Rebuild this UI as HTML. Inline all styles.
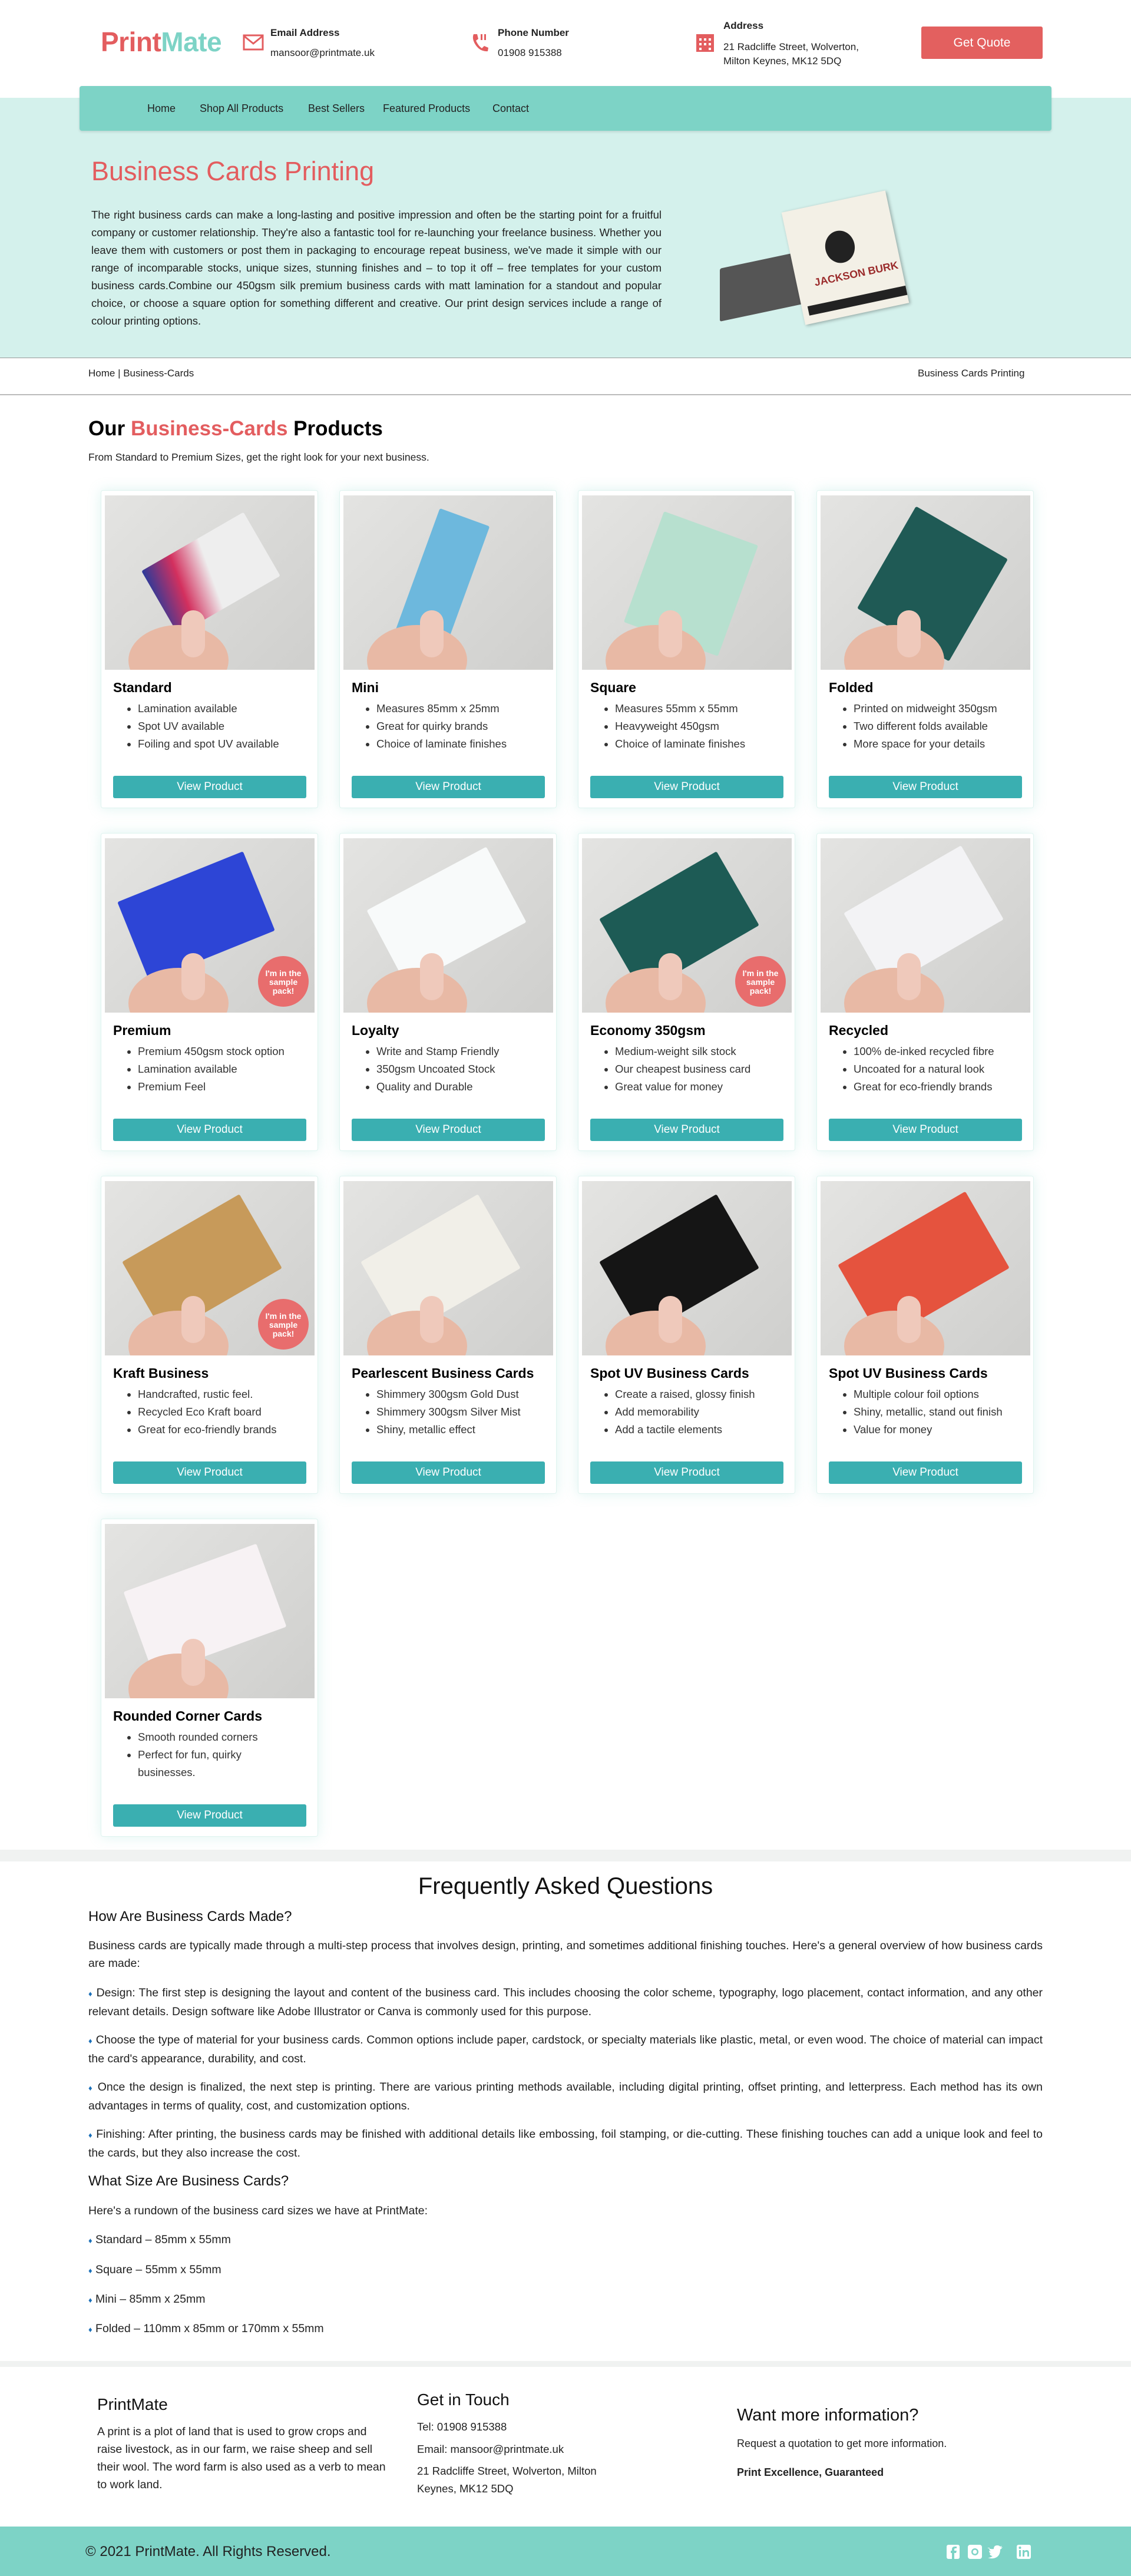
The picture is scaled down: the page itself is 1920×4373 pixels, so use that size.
<!DOCTYPE html>
<html><head><meta charset="utf-8"><style>
*{box-sizing:border-box;margin:0;padding:0}
body{width:1920px;height:4373px;position:relative;background:#fff;font-family:"Liberation Sans",sans-serif;color:#222;overflow:hidden}
.a{position:absolute}
.red{color:#e35d5f}
.hero{left:0;top:166px;width:1920px;height:442px;background:#d4f1ec}
.nav{left:135px;top:146px;width:1650px;height:76px;background:#7dd3c6;border-radius:4px;box-shadow:0 2px 4px rgba(0,0,0,.12)}
.nav span{position:absolute;top:28px;font-size:18px;color:#222}
.card{position:absolute;width:369px;height:540px;background:#fff;border:1px solid #dff3ef;border-radius:4px;box-shadow:0 0 22px rgba(125,211,198,.25)}
.img{position:absolute;left:6px;top:8px;width:356px;height:296px;background:linear-gradient(135deg,#e4e4e2,#cfcfcd);overflow:hidden}
.bc{position:absolute;width:200px;height:125px;left:80px;top:70px;transform:rotate(-30deg);border-radius:3px}
.hand{position:absolute;left:40px;top:220px;width:170px;height:120px;border-radius:50%;background:#e8b9a5}
.thumb{position:absolute;left:130px;top:195px;width:40px;height:80px;border-radius:20px;background:#efc9bb}
.badge{position:absolute;right:10px;top:200px;width:86px;height:86px;border-radius:50%;background:#e86d6d;color:#fff;font-weight:bold;font-size:14px;text-align:center;padding-top:22px;line-height:15px}
.card h3{position:absolute;left:20px;top:321px;font-size:23px;color:#000}
.card ul{position:absolute;left:44px;top:355px;width:310px;font-size:18.5px;line-height:30px;color:#333;list-style:disc;padding-left:18px}
.btn{position:absolute;left:20px;top:484px;width:328px;height:38px;background:#3aafb1;color:#fff;text-align:center;font-size:19px;line-height:38px;border-radius:3px}
.faq p{position:absolute;left:150px;width:1620px;font-size:19.5px;line-height:30px;color:#222;text-align:justify}
.dot{color:#1a6fb8;font-size:13px}
</style></head><body>
<div class="a" style="left:171px;top:44px;font-size:46px;font-weight:bold;letter-spacing:-0.5px"><span class="red">Print</span><span style="color:#7dd3c6">Mate</span></div>
<svg class="a" style="left:412px;top:58px" width="36" height="28" viewBox="0 0 36 28"><rect x="2" y="2" width="32" height="24" fill="none" stroke="#e35d5f" stroke-width="3"/><path d="M2 3 L18 16 L34 3" fill="none" stroke="#e35d5f" stroke-width="3"/></svg>
<div class="a" style="left:459px;top:46px;font-size:17px;font-weight:bold">Email Address</div>
<div class="a" style="left:459px;top:80px;font-size:17px">mansoor@printmate.uk</div>
<svg class="a" style="left:798px;top:54px" width="34" height="36" viewBox="0 0 34 36"><path d="M6 4 L12 4 L14 12 L10 15 Q14 24 20 28 L24 24 L31 27 L30 33 Q16 34 8 20 Q3 11 6 4Z" fill="#e35d5f"/><rect x="18" y="4" width="3" height="10" fill="#e35d5f"/><rect x="24" y="4" width="3" height="10" fill="#e35d5f"/></svg>
<div class="a" style="left:845px;top:46px;font-size:17px;font-weight:bold">Phone Number</div>
<div class="a" style="left:845px;top:80px;font-size:17px">01908 915388</div>
<svg class="a" style="left:1180px;top:56px" width="34" height="34" viewBox="0 0 34 34"><rect x="2" y="2" width="30" height="30" fill="#e35d5f"/><g fill="#fff"><rect x="7" y="9" width="4" height="4"/><rect x="15" y="9" width="4" height="4"/><rect x="23" y="9" width="4" height="4"/><rect x="7" y="17" width="4" height="4"/><rect x="15" y="17" width="4" height="4"/><rect x="23" y="17" width="4" height="4"/><rect x="7" y="25" width="4" height="4"/><rect x="23" y="25" width="4" height="4"/></g></svg>
<div class="a" style="left:1228px;top:34px;font-size:17px;font-weight:bold">Address</div>
<div class="a" style="left:1228px;top:68px;font-size:17px;line-height:24px">21 Radcliffe Street, Wolverton,<br>Milton Keynes, MK12 5DQ</div>
<div class="a" style="left:1564px;top:45px;width:206px;height:55px;background:#e3605f;color:#fff;border-radius:3px;font-size:21px;text-align:center;line-height:55px">Get Quote</div>
<div class="a hero"></div>
<div class="a nav"><span style="left:115px">Home</span><span style="left:204px">Shop All Products</span><span style="left:388px">Best Sellers</span><span style="left:515px">Featured Products</span><span style="left:701px">Contact</span></div>
<div class="a red" style="left:155px;top:265px;font-size:45px">Business Cards Printing</div>
<div class="a" style="left:155px;top:350px;width:968px;font-size:18.5px;line-height:30px;text-align:justify;color:#222">The right business cards can make a long-lasting and positive impression and often be the starting point for a fruitful company or customer relationship. They're also a fantastic tool for re-launching your freelance business. Whether you leave them with customers or post them in packaging to encourage repeat business, we've made it simple with our range of incomparable stocks, unique sizes, stunning finishes and – to top it off – free templates for your custom business cards.Combine our 450gsm silk premium business cards with matt lamination for a standout and popular choice, or choose a square option for something different and creative. Our print design services include a range of colour printing options.</div>
<div class="a" style="left:1222px;top:440px;width:150px;height:90px;background:#555;transform:skewY(-12deg);border-radius:3px"></div>
<div class="a" style="left:1345px;top:340px;width:180px;height:195px;background:#f3f0e6;transform:rotate(-12deg);box-shadow:2px 2px 6px rgba(0,0,0,.3)"><div style="position:absolute;left:60px;top:50px;width:50px;height:55px;border-radius:50%;background:#222"></div><div style="position:absolute;left:30px;top:118px;font-size:18px;font-weight:bold;color:#9b2c2c">JACKSON BURK</div><div style="position:absolute;left:10px;top:165px;width:170px;height:16px;background:#222"></div></div>
<div class="a" style="left:0;top:607px;width:1920px;height:1px;background:#999"></div>
<div class="a" style="left:150px;top:624px;font-size:17px">Home | Business-Cards</div>
<div class="a" style="left:1558px;top:624px;font-size:17px">Business Cards Printing</div>
<div class="a" style="left:0;top:669px;width:1920px;height:2px;background:#bbb"></div>
<div class="a" style="left:150px;top:708px;font-size:35px;font-weight:bold;color:#000">Our <span class="red">Business-Cards</span> Products</div>
<div class="a" style="left:150px;top:766px;font-size:17.5px">From Standard to Premium Sizes, get the right look for your next business.</div>

<div class="card" style="left:171px;top:832px"><div class="img"><div class="bc" style="background:linear-gradient(100deg,#2a3a9a,#d3305e 25%,#eee 50%)"></div><div class="hand"></div><div class="thumb"></div></div><h3>Standard</h3><ul><li>Lamination available</li><li>Spot UV available</li><li>Foiling and spot UV available</li></ul><div class="btn">View Product</div></div>
<div class="card" style="left:576px;top:832px"><div class="img"><div class="bc" style="background:#6db8dd;width:90px;height:240px;left:120px;top:30px;transform:rotate(20deg)"></div><div class="hand"></div><div class="thumb"></div></div><h3>Mini</h3><ul><li>Measures 85mm x 25mm</li><li>Great for quirky brands</li><li>Choice of laminate finishes</li></ul><div class="btn">View Product</div></div>
<div class="card" style="left:981px;top:832px"><div class="img"><div class="bc" style="background:#b7e0cf;width:170px;height:200px;left:100px;top:50px;transform:rotate(20deg)"></div><div class="hand"></div><div class="thumb"></div></div><h3>Square</h3><ul><li>Measures 55mm x 55mm</li><li>Heavyweight 450gsm</li><li>Choice of laminate finishes</li></ul><div class="btn">View Product</div></div>
<div class="card" style="left:1386px;top:832px"><div class="img"><div class="bc" style="background:#1f5a55;width:180px;height:200px;left:100px;top:50px;transform:rotate(30deg)"></div><div class="hand"></div><div class="thumb"></div></div><h3>Folded</h3><ul><li>Printed on midweight 350gsm</li><li>Two different folds available</li><li>More space for your details</li></ul><div class="btn">View Product</div></div>

<div class="card" style="left:171px;top:1414px"><div class="img"><div class="bc" style="background:#2d45d6;width:230px;height:145px;left:40px;top:60px;transform:rotate(-22deg)"></div><div class="hand"></div><div class="thumb"></div><div class="badge">I'm in the sample pack!</div></div><h3>Premium</h3><ul><li>Premium 450gsm stock option</li><li>Lamination available</li><li>Premium Feel</li></ul><div class="btn">View Product</div></div>
<div class="card" style="left:576px;top:1414px"><div class="img"><div class="bc" style="background:#f8fafa;width:230px;height:145px;left:60px;top:60px;transform:rotate(-28deg)"></div><div class="hand"></div><div class="thumb"></div></div><h3>Loyalty</h3><ul><li>Write and Stamp Friendly</li><li>350gsm Uncoated Stock</li><li>Quality and Durable</li></ul><div class="btn">View Product</div></div>
<div class="card" style="left:981px;top:1414px"><div class="img"><div class="bc" style="background:#1d5b55;width:230px;height:145px;left:50px;top:70px;transform:rotate(-30deg)"></div><div class="hand"></div><div class="thumb"></div><div class="badge">I'm in the sample pack!</div></div><h3>Economy 350gsm</h3><ul><li>Medium-weight silk stock</li><li>Our cheapest business card</li><li>Great value for money</li></ul><div class="btn">View Product</div></div>
<div class="card" style="left:1386px;top:1414px"><div class="img"><div class="bc" style="background:#f3f3f5;width:230px;height:145px;left:60px;top:60px;transform:rotate(-30deg)"></div><div class="hand"></div><div class="thumb"></div></div><h3>Recycled</h3><ul><li>100% de-inked recycled fibre</li><li>Uncoated for a natural look</li><li>Great for eco-friendly brands</li></ul><div class="btn">View Product</div></div>

<div class="card" style="left:171px;top:1996px"><div class="img"><div class="bc" style="background:#c79a5a;width:230px;height:145px;left:50px;top:70px;transform:rotate(-30deg)"></div><div class="hand"></div><div class="thumb"></div><div class="badge">I'm in the sample pack!</div></div><h3>Kraft Business</h3><ul><li>Handcrafted, rustic feel.</li><li>Recycled Eco Kraft board</li><li>Great for eco-friendly brands</li></ul><div class="btn">View Product</div></div>
<div class="card" style="left:576px;top:1996px"><div class="img"><div class="bc" style="background:#f1efe8;width:230px;height:145px;left:50px;top:70px;transform:rotate(-30deg)"></div><div class="hand"></div><div class="thumb"></div></div><h3>Pearlescent Business Cards</h3><ul><li>Shimmery 300gsm Gold Dust</li><li>Shimmery 300gsm Silver Mist</li><li>Shiny, metallic effect</li></ul><div class="btn">View Product</div></div>
<div class="card" style="left:981px;top:1996px"><div class="img"><div class="bc" style="background:#151515;width:230px;height:145px;left:50px;top:70px;transform:rotate(-30deg)"></div><div class="hand"></div><div class="thumb"></div></div><h3>Spot UV Business Cards</h3><ul><li>Create a raised, glossy finish</li><li>Add memorability</li><li>Add a tactile elements</li></ul><div class="btn">View Product</div></div>
<div class="card" style="left:1386px;top:1996px"><div class="img"><div class="bc" style="background:#e5533e;width:250px;height:150px;left:50px;top:70px;transform:rotate(-30deg)"></div><div class="hand"></div><div class="thumb"></div></div><h3>Spot UV Business Cards</h3><ul><li>Multiple colour foil options</li><li>Shiny, metallic, stand out finish</li><li>Value for money</li></ul><div class="btn">View Product</div></div>

<div class="card" style="left:171px;top:2578px"><div class="img"><div class="bc" style="background:#f7f2f4;width:240px;height:150px;left:50px;top:70px;transform:rotate(-20deg)"></div><div class="hand"></div><div class="thumb"></div></div><h3>Rounded Corner Cards</h3><ul style="width:260px"><li>Smooth rounded corners</li><li>Perfect for fun, quirky businesses.</li></ul><div class="btn">View Product</div></div>

<div class="a" style="left:0;top:3140px;width:1920px;height:20px;background:#f0f2f1"></div>
<div class="faq">
<div class="a" style="left:0;width:1920px;top:3180px;text-align:center;font-size:40px;color:#111">Frequently Asked Questions</div>
<div class="a" style="left:150px;top:3240px;font-size:24px;color:#111">How Are Business Cards Made?</div>
<p style="top:3288px">Business cards are typically made through a multi-step process that involves design, printing, and sometimes additional finishing touches. Here's a general overview of how business cards are made:</p>
<p style="top:3368px"><span class="dot">♦</span> Design: The first step is designing the layout and content of the business card. This includes choosing the color scheme, typography, logo placement, contact information, and any other relevant details. Design software like Adobe Illustrator or Canva is commonly used for this purpose.</p>
<p style="top:3448px"><span class="dot">♦</span> Choose the type of material for your business cards. Common options include paper, cardstock, or specialty materials like plastic, metal, or even wood. The choice of material can impact the card's appearance, durability, and cost.</p>
<p style="top:3528px"><span class="dot">♦</span> Once the design is finalized, the next step is printing. There are various printing methods available, including digital printing, offset printing, and letterpress. Each method has its own advantages in terms of quality, cost, and customization options.</p>
<p style="top:3608px"><span class="dot">♦</span> Finishing: After printing, the business cards may be finished with additional details like embossing, foil stamping, or die-cutting. These finishing touches can add a unique look and feel to the cards, but they also increase the cost.</p>
<div class="a" style="left:150px;top:3689px;font-size:24px;color:#111">What Size Are Business Cards?</div>
<p style="top:3738px">Here's a rundown of the business card sizes we have at PrintMate:</p>
<p style="top:3787px"><span class="dot">♦</span> Standard – 85mm x 55mm</p>
<p style="top:3838px"><span class="dot">♦</span> Square – 55mm x 55mm</p>
<p style="top:3888px"><span class="dot">♦</span> Mini – 85mm x 25mm</p>
<p style="top:3938px"><span class="dot">♦</span> Folded – 110mm x 85mm or 170mm x 55mm</p>
</div>
<div class="a" style="left:0;top:4008px;width:1920px;height:10px;background:#f0f2f1"></div>
<div class="a" style="left:165px;top:4066px;font-size:28px;color:#111">PrintMate</div>
<div class="a" style="left:165px;top:4113px;width:490px;font-size:19.5px;line-height:30px">A print is a plot of land that is used to grow crops and raise livestock, as in our farm, we raise sheep and sell their wool. The word farm is also used as a verb to mean to work land.</div>
<div class="a" style="left:708px;top:4058px;font-size:28px;color:#111">Get in Touch</div>
<div class="a" style="left:708px;top:4109px;font-size:18.5px">Tel: 01908 915388</div>
<div class="a" style="left:708px;top:4147px;font-size:18.5px">Email: mansoor@printmate.uk</div>
<div class="a" style="left:708px;top:4180px;width:350px;font-size:18.5px;line-height:30px">21 Radcliffe Street, Wolverton, Milton Keynes, MK12 5DQ</div>
<div class="a" style="left:1251px;top:4084px;font-size:29px;color:#111">Want more information?</div>
<div class="a" style="left:1251px;top:4138px;font-size:18px">Request a quotation to get more information.</div>
<div class="a" style="left:1251px;top:4187px;font-size:18px;font-weight:bold">Print Excellence, Guaranteed</div>
<div class="a" style="left:0;top:4289px;width:1920px;height:84px;background:#7dd3c6"></div>
<div class="a" style="left:145px;top:4318px;font-size:24px;color:#222">© 2021 PrintMate. All Rights Reserved.</div>
<svg class="a" style="left:1606px;top:4319px" width="148" height="26" viewBox="0 0 148 26"><g fill="#fff"><rect x="1" y="1" width="22" height="24" rx="3"/><path d="M41 1h16a4 4 0 0 1 4 4v16a4 4 0 0 1-4 4H41a4 4 0 0 1-4-4V5a4 4 0 0 1 4-4z"/><path d="M70 6q6 3 11 2q0-6 6-6q3 0 5 2l3-1l-2 3l3-1q-2 3-4 4q0 9-6 13q-7 4-15 1q5 0 8-3q-4 0-5-4h3q-4-1-4-5q1 1 3 1q-4-3-2-6z"/><rect x="120" y="1" width="24" height="24" rx="3"/></g><g fill="#7dd3c6"><path d="M14 25V15h3l1-4h-4V9q0-2 2-2h2V4h-3q-5 0-5 5v2H8v4h2v10z"/><circle cx="49" cy="13" r="6"/><rect x="124" y="10" width="3" height="11"/><circle cx="125.5" cy="6" r="2"/><path d="M130 10h3v2q1-2 4-2q4 0 4 5v6h-3v-6q0-2-2-2t-3 2v6h-3z"/></g><circle cx="49" cy="13" r="3.5" fill="#fff"/></svg>
</body></html>
